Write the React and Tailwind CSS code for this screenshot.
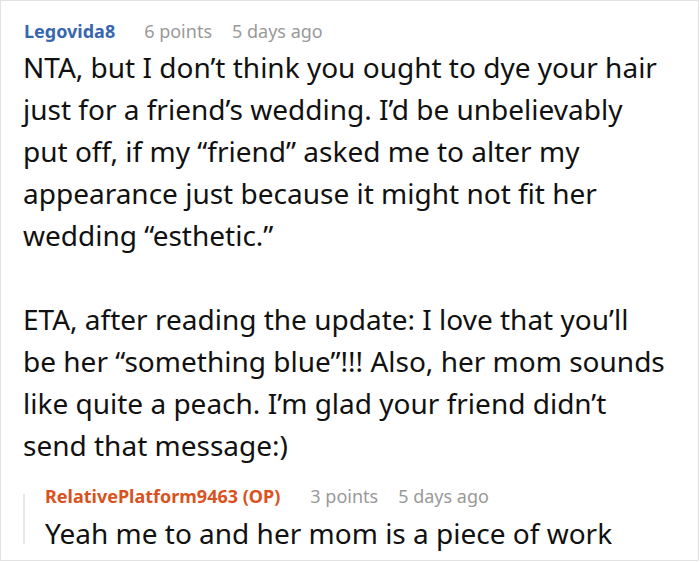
import React from 'react';

export default function App(){
  return (
    <div className="w-[699px] h-[561px] border border-[#e2e2e2] bg-white overflow-hidden" style={{fontFamily:'"Noto Sans", "Open Sans", sans-serif'}}>
      <div className="pl-[22px] pr-4 pt-[17px]">
        <div className="flex items-baseline text-[18px] leading-[26px] pl-px">
          <span className="font-bold text-[#3867b0]">Legovida8</span>
          <span className="ml-[29px] text-[#999999]">6 points</span>
          <span className="ml-[20px] text-[#999999]">5 days ago</span>
        </div>
        <div className="mt-[2px] text-[28px] leading-[42px] text-[#111111] w-[644px]">
          <p>NTA, but I don’t think you ought to dye your hair just for a friend’s wedding. I’d be unbelievably put off, if my “friend” asked me to alter my appearance just because it might not fit her wedding “esthetic.”</p>
          <p className="mt-[42px]">ETA, after reading the update: I love that you’ll be her “something blue”!!! Also, her mom sounds like quite a peach. I’m glad your friend didn’t send that message:)</p>
        </div>
        <div className="mt-[17px] flex">
          <div className="w-[2px] bg-[#e6e6e6] mt-[11px] mb-[9px]"></div>
          <div className="pl-[20px]">
            <div className="flex items-baseline text-[18px] leading-[26px]">
              <span className="font-bold text-[#d9531e]">RelativePlatform9463 (OP)</span>
              <span className="ml-[30px] text-[#999999]">3 points</span>
              <span className="ml-[20px] text-[#999999]">5 days ago</span>
            </div>
            <p className="mt-[4px] text-[28px] leading-[40px] text-[#111111]">Yeah me to and her mom is a piece of work</p>
          </div>
        </div>
      </div>
    </div>
  );
}
